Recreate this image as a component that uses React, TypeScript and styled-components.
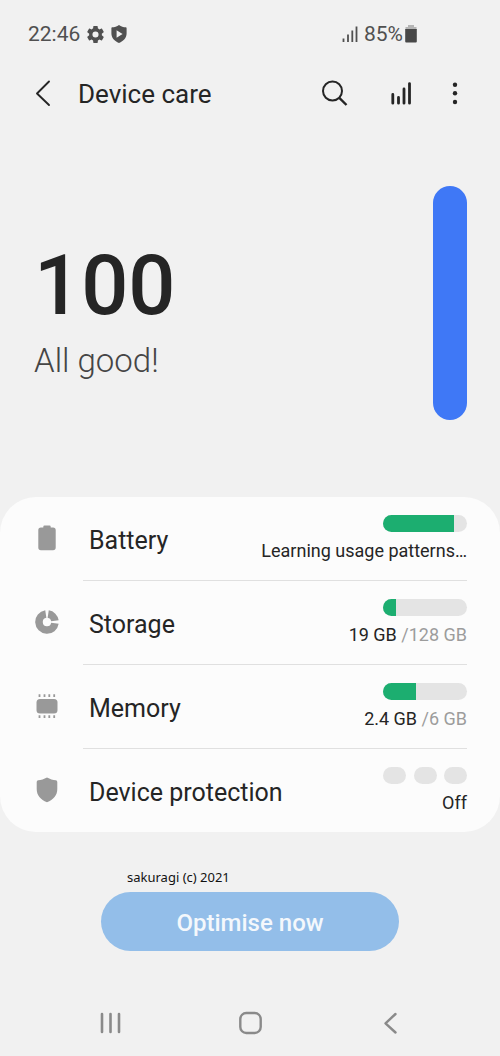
import React from "react";
import styled, { createGlobalStyle } from "styled-components";

const GlobalStyle = createGlobalStyle`
  *, *::before, *::after { box-sizing: border-box; }
  body {
    margin: 0;
    background: #f1f1f1;
    color: #252525;
    font-family: Roboto, "Liberation Sans", sans-serif;
  }
  button { font: inherit; color: inherit; border: 0; padding: 0; background: none; cursor: pointer; }
  svg { display: block; }
`;

const Screen = styled.div`
  display: flex;
  flex-direction: column;
  min-height: 100vh;
`;

const StatusBar = styled.div`
  display: flex;
  align-items: center;
  justify-content: space-between;
  height: 68px;
  padding: 0 83px 0 28px;
  font-size: 21px;
  line-height: 24px;
  color: #505050;
`;

const StatusGroup = styled.div<{ $gap: number }>`
  display: flex;
  align-items: center;
  gap: ${(p) => p.$gap}px;
`;

const Header = styled.header`
  display: flex;
  align-items: center;
  height: 52px;
  padding: 0 31px 0 29px;
`;

const IconButton = styled.button`
  display: flex;
  align-items: center;
  justify-content: center;
  width: 28px;
  height: 40px;
`;

const Title = styled.h1`
  flex: 1;
  margin: 0;
  padding-left: 21px;
  font-size: 26px;
  line-height: 32px;
  font-weight: 400;
`;

const Actions = styled.div`
  display: flex;
  align-items: center;
  gap: 26px;
  & > :first-child { margin-right: 12px; }
`;

const Hero = styled.section`
  display: flex;
  align-items: flex-start;
  justify-content: space-between;
  padding: 66px 33px 77px;
`;

const ScoreText = styled.div`
  display: flex;
  flex-direction: column;
  padding: 52px 0 0 1px;
`;

const Score = styled.strong`
  font-size: 83px;
  line-height: 96px;
  font-weight: 500;
`;

const Verdict = styled.span`
  font-size: 33px;
  line-height: 54px;
  font-weight: 300;
  color: #454545;
`;

const ScoreBar = styled.div`
  width: 34px;
  height: 234px;
  border-radius: 17px;
  background: #3f78f6;
`;

const Card = styled.ul`
  margin: 0;
  padding: 0;
  list-style: none;
  border-radius: 36px;
  background: #fcfcfc;
`;

const Row = styled.button<{ $last: boolean }>`
  display: flex;
  width: 100%;
  height: ${(p) => (p.$last ? 83 : 84)}px;
  padding-right: 33px;
  text-align: left;
`;

const RowIcon = styled.span`
  display: flex;
  align-items: center;
  justify-content: center;
  width: 83px;
  height: 82px;
  padding-left: 11px;
  color: #999;
`;

const RowBody = styled.span<{ $last: boolean }>`
  display: flex;
  flex: 1;
  justify-content: space-between;
  height: 84px;
  padding: 18px 0 0 6px;
  border-bottom: ${(p) => (p.$last ? "0" : "1px solid #e0e0e0")};
`;

const RowLabel = styled.span`
  padding-top: 10px;
  font-size: 25px;
  line-height: 32px;
  white-space: nowrap;
`;

const RowStatus = styled.span`
  display: flex;
  flex-direction: column;
  align-items: flex-end;
  gap: 7px;
`;

const RowValue = styled.span`
  font-size: 18px;
  line-height: 24px;
  white-space: nowrap;
`;

const Muted = styled.span`
  color: #9c9c9c;
`;

const Track = styled.span`
  display: block;
  overflow: hidden;
  width: 84px;
  height: 17px;
  border-radius: 9px;
  background: #e4e4e4;
`;

const Fill = styled.span`
  display: block;
  height: 100%;
  background: #1cae70;
`;

const Pills = styled.span`
  display: flex;
  justify-content: space-between;
  width: 84px;
`;

const Pill = styled.span`
  width: 23px;
  height: 17px;
  border-radius: 9px;
  background: #e4e4e4;
`;

const Footer = styled.section`
  padding: 36px 101px 24px;
`;

const Credit = styled.p`
  margin: 0 0 6px 26px;
  font-family: "Noto Sans", "Open Sans", sans-serif;
  font-size: 13px;
  line-height: 18px;
  color: #111;
`;

const OptimiseButton = styled.button`
  display: block;
  width: 100%;
  height: 59px;
  padding-top: 2px;
  border-radius: 30px;
  background: #93bee9;
  color: #f4f8fc;
  font-size: 24px;
  font-weight: 500;
`;

const NavBar = styled.nav`
  display: grid;
  grid-template-columns: repeat(3, 1fr);
  align-items: center;
  justify-items: center;
  height: 66px;
  margin-top: auto;
  padding: 0 40px;
  color: #8a8a8a;
`;

const GearIcon = () => (
  <svg width="17" height="17" viewBox="2 2 20 20" fill="currentColor" aria-hidden="true">
    <path d="M19.43 12.98c.04-.32.07-.64.07-.98s-.03-.66-.07-.98l2.11-1.65c.19-.15.24-.42.12-.64l-2-3.46c-.12-.22-.39-.3-.61-.22l-2.49 1c-.52-.4-1.08-.73-1.69-.98l-.38-2.65A.49.49 0 0 0 14 2h-4c-.25 0-.46.18-.49.42l-.38 2.65c-.61.25-1.17.59-1.69.98l-2.49-1c-.23-.09-.49 0-.61.22l-2 3.46c-.13.22-.07.49.12.64l2.11 1.65c-.04.32-.07.65-.07.98s.03.66.07.98l-2.11 1.65c-.19.15-.24.42-.12.64l2 3.46c.12.22.39.3.61.22l2.49-1c.52.4 1.08.73 1.69.98l.38 2.65c.03.24.24.42.49.42h4c.25 0 .46-.18.49-.42l.38-2.65c.61-.25 1.17-.59 1.69-.98l2.49 1c.23.09.49 0 .61-.22l2-3.46c.12-.22.07-.49-.12-.64l-2.11-1.65zM12 15.6a3.6 3.6 0 1 1 0-7.2 3.6 3.6 0 0 1 0 7.2z" />
  </svg>
);

const PlayShieldIcon = () => (
  <svg width="16" height="18" viewBox="0 0 16 18" fill="currentColor" aria-hidden="true">
    <path fillRule="evenodd" d="M8 0C10 1.600 12.600 2.300 14.800 2.300Q15.600 2.300 15.600 3.200V8.500C15.600 13 12.500 16 8 18C3.500 16 .4 13 .4 8.500V3.200Q.4 2.300 1.200 2.300C3.400 2.300 6 1.600 8 0ZM5.600 5.300V12.700L11.600 9Z" />
  </svg>
);

const SignalIcon = () => (
  <svg width="16" height="17" viewBox="0 0 16 17" fill="none" stroke="currentColor" strokeWidth="1.800" aria-hidden="true">
    <path d="M1.500 12.500V16M6 8.500V16M10.300 4.500V16M14.500 .5V16" />
  </svg>
);

const StatusBatteryIcon = () => (
  <svg width="12" height="18" viewBox="0 0 12 18" aria-hidden="true">
    <path d="M3 0H9V2H11.500V5H.5V2H3Z" fill="#b5b5b5" />
    <path d="M.2 4H11.800V16.500Q11.800 17.500 10.800 17.500H1.200Q.2 17.500 .2 16.500Z" fill="#484848" />
  </svg>
);

const BackIcon = () => (
  <svg width="28" height="28" viewBox="0 0 28 28" fill="none" stroke="currentColor" strokeWidth="1.900" strokeLinecap="round" strokeLinejoin="round" aria-hidden="true">
    <path d="M20 1.500L8 13.500L20 25" />
  </svg>
);

const SearchIcon = () => (
  <svg width="28" height="28" viewBox="0 0 28 28" fill="none" stroke="currentColor" strokeWidth="2" aria-hidden="true">
    <circle cx="11.500" cy="11" r="9.500" />
    <path d="M18.300 17.800L25.500 25" strokeWidth="2.400" />
  </svg>
);

const ChartIcon = () => (
  <svg width="22" height="24" viewBox="0 0 22 24" fill="none" stroke="currentColor" strokeWidth="2.800" strokeLinecap="round" aria-hidden="true">
    <path d="M2.800 12.500V21.200M8.500 15.500V21.200M14 7V21.200M19.500 1.600V21.200" />
  </svg>
);

const MoreIcon = () => (
  <svg width="6" height="24" viewBox="0 0 6 24" fill="currentColor" aria-hidden="true">
    <circle cx="3" cy="2.700" r="2.200" />
    <circle cx="3" cy="11.300" r="2.200" />
    <circle cx="3" cy="20" r="2.200" />
  </svg>
);

const BatteryIcon = () => (
  <svg width="24" height="26" viewBox="0 0 24 26" fill="currentColor" aria-hidden="true">
    <path d="M9.500 .5H14.500Q15.700 .5 15.700 1.700V2.500H18Q20.700 2.500 20.700 5V22.500Q20.700 25.300 18 25.300H6Q3.300 25.300 3.300 22.500V5Q3.300 2.500 6 2.500H8.300V1.700Q8.300 .5 9.500 .5Z" />
  </svg>
);

const StorageIcon = () => (
  <svg width="24" height="24" viewBox="0 0 24 24" fill="none" stroke="currentColor" strokeWidth="7.600" aria-hidden="true">
    <path d="M10.800 4.100A8 8 0 1 0 19.900 13.200" />
    <path d="M13.200 4.100A8 8 0 0 1 19.900 10.800" />
  </svg>
);

const MemoryIcon = () => (
  <svg width="24" height="26" viewBox="0 0 24 26" fill="currentColor" aria-hidden="true">
    <rect x="1.500" y="6" width="21" height="14.500" rx="3.500" />
    <path d="M4.500 1.200V4M9.500 1.200V4M14.300 1.200V4M19.200 1.200V4M4.500 22.300V25M9.500 22.300V25M14.300 22.300V25M19.200 22.300V25" stroke="currentColor" strokeWidth="1.800" />
  </svg>
);

const ShieldIcon = () => (
  <svg width="24" height="26" viewBox="0 0 24 26" fill="currentColor" aria-hidden="true">
    <path d="M12 .5C15 2.200 18 3 20.800 3.200Q22.300 3.400 22.300 5V12C22.300 18.500 18.500 22.500 12 25.300C5.500 22.500 1.700 18.500 1.700 12V5Q1.700 3.400 3.200 3.200C6 3 9 2.200 12 .5Z" />
  </svg>
);

type MeterProps = { label: string; percent: number };

const Meter = ({ label, percent }: MeterProps) => (
  <Track role="meter" aria-label={label} aria-valuemin={0} aria-valuemax={100} aria-valuenow={percent}>
    <Fill style={{ width: `${percent}%` }} />
  </Track>
);

type Item = {
  label: string;
  icon: React.ReactNode;
  percent?: number;
  value: string;
  total?: string;
};

const items: Item[] = [
  { label: "Battery", icon: <BatteryIcon />, percent: 85, value: "Learning usage patterns…" },
  { label: "Storage", icon: <StorageIcon />, percent: 15, value: "19 GB ", total: "/128 GB" },
  { label: "Memory", icon: <MemoryIcon />, percent: 39, value: "2.4 GB ", total: "/6 GB" },
  { label: "Device protection", icon: <ShieldIcon />, value: "Off" },
];

export default function App() {
  return (
    <Screen>
      <GlobalStyle />
      <StatusBar>
        <StatusGroup $gap={7}>
          <span>22:46</span>
          <GearIcon />
          <PlayShieldIcon />
        </StatusGroup>
        <StatusGroup $gap={6}>
          <SignalIcon />
          <StatusGroup $gap={2}>
            <span>85%</span>
            <StatusBatteryIcon />
          </StatusGroup>
        </StatusGroup>
      </StatusBar>
      <Header>
        <IconButton aria-label="Back"><BackIcon /></IconButton>
        <Title>Device care</Title>
        <Actions>
          <IconButton aria-label="Search"><SearchIcon /></IconButton>
          <IconButton aria-label="Usage"><ChartIcon /></IconButton>
          <IconButton aria-label="More options"><MoreIcon /></IconButton>
        </Actions>
      </Header>
      <main>
        <Hero>
          <ScoreText>
            <Score>100</Score>
            <Verdict>All good!</Verdict>
          </ScoreText>
          <ScoreBar />
        </Hero>
        <Card>
          {items.map((item, i) => (
            <li key={item.label}>
              <Row $last={i === items.length - 1}>
                <RowIcon>{item.icon}</RowIcon>
                <RowBody $last={i === items.length - 1}>
                  <RowLabel>{item.label}</RowLabel>
                  <RowStatus>
                    {item.percent !== undefined ? (
                      <Meter label={item.label} percent={item.percent} />
                    ) : (
                      <Pills>
                        <Pill />
                        <Pill />
                        <Pill />
                      </Pills>
                    )}
                    <RowValue>
                      {item.value}
                      {item.total && <Muted>{item.total}</Muted>}
                    </RowValue>
                  </RowStatus>
                </RowBody>
              </Row>
            </li>
          ))}
        </Card>
        <Footer>
          <Credit>sakuragi (c) 2021</Credit>
          <OptimiseButton>Optimise now</OptimiseButton>
        </Footer>
      </main>
      <NavBar aria-label="System">
        <IconButton aria-label="Recent apps">
          <svg width="22" height="22" viewBox="0 0 22 22" fill="none" stroke="currentColor" strokeWidth="2.600" strokeLinecap="round" aria-hidden="true">
            <path d="M3 2V20M11.500 2V20M20 2V20" />
          </svg>
        </IconButton>
        <IconButton aria-label="Home">
          <svg width="24" height="24" viewBox="0 0 24 24" fill="none" stroke="currentColor" strokeWidth="2.400" aria-hidden="true">
            <rect x="2.300" y="2" width="20.400" height="20" rx="6" />
          </svg>
        </IconButton>
        <IconButton aria-label="Back to previous screen">
          <svg width="22" height="22" viewBox="0 0 22 22" fill="none" stroke="currentColor" strokeWidth="2.400" strokeLinecap="round" strokeLinejoin="round" aria-hidden="true">
            <path d="M16.500 2L6.500 11.300L16.500 20.500" />
          </svg>
        </IconButton>
      </NavBar>
    </Screen>
  );
}
